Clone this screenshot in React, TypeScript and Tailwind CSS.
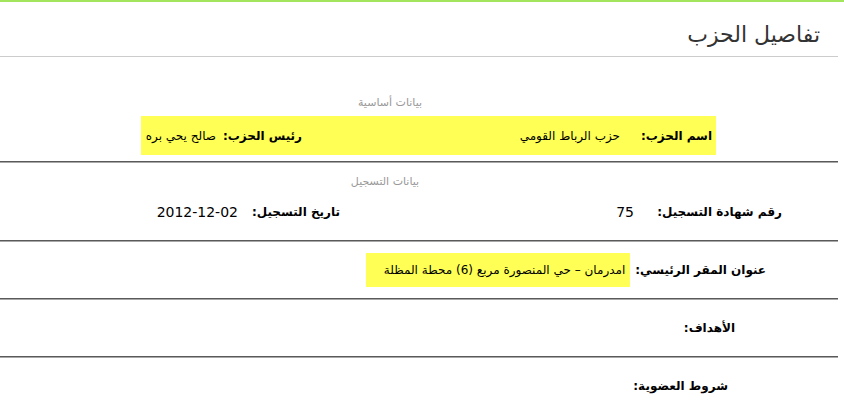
import React from "react";

const hr = "h-[2px] border-t border-t-[#5a5a5a] border-b border-b-[#a8a8a8]";

export default function App() {
  return (
    <div className="w-[844px] h-[417px] overflow-hidden bg-white text-black font-['DejaVu_Sans',sans-serif] whitespace-nowrap">
      <div className="h-[2px] bg-[#a3e65e]" />
      <div dir="rtl" className="w-[838px]">
        <div className="h-[55px] border-b border-[#cccccc] pr-[18px] pt-[19px] text-[22px] leading-[28px] text-[#333]">
          تفاصيل الحزب
        </div>

        <div className="pt-[39px] pr-[58px] text-center text-[11px] leading-[14px] text-[#999]">
          بيانات أساسية
        </div>
        <div className="mt-[6px] mr-[122px] flex h-[39px] w-[575px] items-center bg-[#ffff55] text-[12px]">
          <div className="w-[96px] shrink-0 pr-[4px] font-bold">اسم الحزب:</div>
          <div className="w-[318px] shrink-0">حزب الرباط القومي</div>
          <div className="w-[86px] shrink-0 font-bold">رئيس الحزب:</div>
          <div>صالح يحي بره</div>
        </div>
        <div className={`mt-[6px] ${hr}`} />

        <div className="pt-[12px] pr-[68px] text-center text-[11px] leading-[14px] text-[#999]">
          بيانات التسجيل
        </div>
        <div className="mt-[14px] mr-[56px] flex h-[18px] items-center text-[12px]">
          <div className="w-[148px] shrink-0 font-bold">رقم شهادة التسجيل:</div>
          <div className="w-[294px] shrink-0 text-[14px]">75</div>
          <div className="w-[102px] shrink-0 font-bold">تاريخ التسجيل:</div>
          <div className="text-[14px]">2012-12-02</div>
        </div>
        <div className={`mt-[19px] ${hr}`} />

        <div className="mt-[11px] mr-[72px] flex h-[34px] items-center gap-[5px] text-[12px]">
          <div className="shrink-0 font-bold">عنوان المقر الرئيسي:</div>
          <div className="flex h-[34px] w-[264px] shrink-0 items-center bg-[#ffff55] pr-[5px]">
            امدرمان – حي المنصورة مربع (6) محطة المظلة
          </div>
        </div>
        <div className={`mt-[11px] ${hr}`} />

        <div className="mr-[103px] flex h-[56px] items-center text-[12px] font-bold">
          الأهداف:
        </div>
        <div className={hr} />

        <div className="mr-[110px] flex h-[56px] items-center text-[12px] font-bold">
          شروط العضوية:
        </div>
      </div>
    </div>
  );
}
